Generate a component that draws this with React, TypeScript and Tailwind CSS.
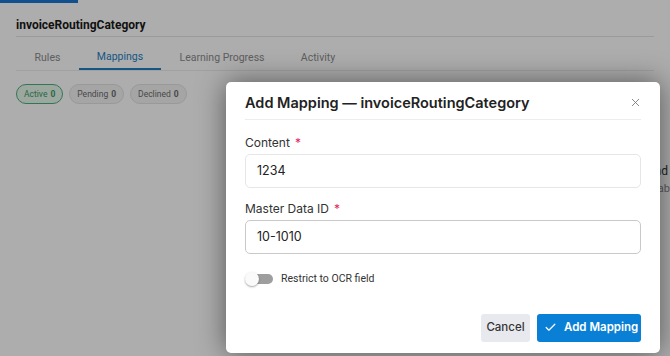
import { Check, X } from "lucide-react";

const sans = { fontFamily: "Roboto, 'Liberation Sans', sans-serif" };
const modalFont = { fontFamily: "Inter, 'Noto Sans', sans-serif" };

function Chip({ label, count, active }: { label: string; count: number; active?: boolean }) {
    return (
        <span
            className={
                active
                    ? "flex h-[20px] items-center gap-[3px] rounded-full border border-[#4caf7d] bg-[#e6f6ec] px-[7px] text-[8.5px] text-[#3c9a63]"
                    : "flex h-[20px] items-center gap-[3px] rounded-full border border-[#e2e2e2] bg-[#f3f3f3] px-[7px] text-[8.5px] text-[#6b6b6b]"
            }
        >
            {label} <b className="font-bold">{count}</b>
        </span>
    );
}

function Page() {
    return (
        <div className="h-full bg-white" style={sans}>
            <div className="h-[3px] w-[78px] bg-[#1976d2]" />
            <div className="px-4">
                <div className="flex h-[34px] items-center border-b border-[#e5e5e5] pt-[10px] text-[12px] font-bold text-[#1a1a1a]">
                    invoiceRoutingCategory
                </div>
                <div className="flex h-[34px] border-b border-[#ececec] text-[10.5px] text-[#8c8c8c]">
                    <div className="flex w-[63px] items-center justify-center pt-[8px]">Rules</div>
                    <div className="flex w-[82px] items-center justify-center border-b-2 border-[#1f7fc4] pt-[8px] text-[#1f7fc4]">Mappings</div>
                    <div className="flex w-[122px] items-center justify-center pt-[8px]">Learning Progress</div>
                    <div className="flex w-[70px] items-center justify-center pt-[8px]">Activity</div>
                </div>
                <div className="flex gap-[6px] pt-[13px]">
                    <Chip label="Active" count={0} active />
                    <Chip label="Pending" count={0} />
                    <Chip label="Declined" count={0} />
                </div>
                <div className="-mr-4 pt-[59px] text-right text-[12px] leading-[17px] text-[#333]">
                    <div className="pr-[2px]">No mappings found</div>
                    <div className="text-[11px] text-[#8a8a8a]">Create a mapping to populate this tab</div>
                </div>
            </div>
        </div>
    );
}

function Field({ label, value, focus }: { label: string; value: string; focus?: boolean }) {
    return (
        <div>
            <div className="mb-[3px] flex h-4 items-center gap-[5px] text-[12px] text-[#333]">
                {label}
                <span className="text-[12px] text-[#e0245e]">*</span>
            </div>
            <div
                className={
                    focus
                        ? "flex h-[34px] items-center rounded-[5px] border border-[#c9c9c9] px-[11px] text-[12.5px] text-[#222]"
                        : "flex h-[34px] items-center rounded-[5px] border border-[#e6e6e6] px-[11px] text-[12.5px] text-[#222]"
                }
            >
                {value}
            </div>
        </div>
    );
}

function Modal() {
    return (
        <div
            className="absolute left-[226px] top-[82px] w-[434px] rounded-[5px] bg-white px-[19px] pb-[11px] shadow-[0_0_28px_rgba(0,0,0,0.5)]"
            style={modalFont}
        >
            <div className="flex h-[38px] items-end justify-between border-b border-[#ececec] pb-[5px]">
                <span className="text-[14.5px] font-semibold text-[#222]">Add Mapping — invoiceRoutingCategory</span>
                <X className="mb-[5px] mr-[-1px] h-[13px] w-[13px] text-[#777]" strokeWidth={1.6} />
            </div>
            <div className="pt-[15px]">
                <Field label="Content" value="1234" />
            </div>
            <div className="pt-[13px]">
                <Field label="Master Data ID" value="10-1010" focus />
            </div>
            <div className="flex items-center gap-[8px] pt-[17px]" style={sans}>
                <div className="relative h-[14px] w-[28px]">
                    <div className="absolute left-[4px] right-0 top-[2px] h-[10px] rounded-full bg-[#9e9e9e]" />
                    <div className="absolute left-0 top-0 h-[14px] w-[14px] rounded-full bg-[#fafafa] shadow-[0_1px_2px_rgba(0,0,0,0.35)]" />
                </div>
                <span className="text-[10.5px] text-[#333]">Restrict to OCR field</span>
            </div>
            <div className="flex justify-end gap-[7px] pt-[27px]">
                <button className="h-[28px] w-[49px] rounded-[3px] bg-[#e8e9ef] text-[11.5px] font-medium text-[#333]">Cancel</button>
                <button className="flex h-[28px] w-[104px] items-center gap-[7px] rounded-[3px] bg-[#0a7fd6] pl-[7px] text-[11.5px] font-semibold text-white">
                    <Check className="h-[13px] w-[13px]" strokeWidth={2.2} />
                    Add Mapping
                </button>
            </div>
        </div>
    );
}

export default function App() {
    return (
        <div className="relative h-[356px] w-[670px] overflow-hidden">
            <Page />
            <div className="absolute inset-0 bg-black/[0.32]" />
            <Modal />
        </div>
    );
}
